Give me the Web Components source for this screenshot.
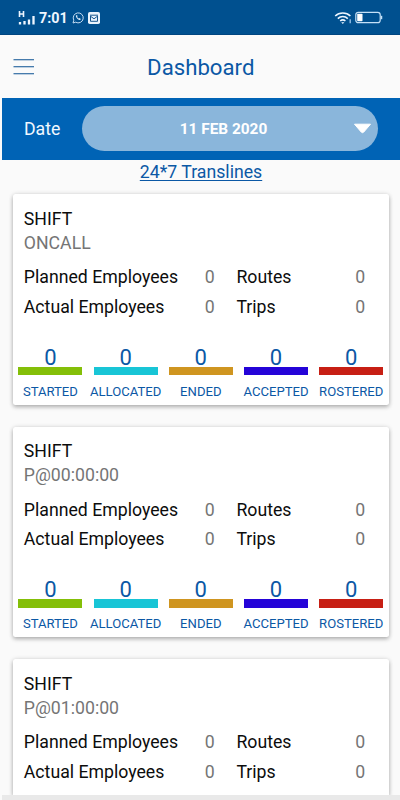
<!DOCTYPE html>
<html lang="en">
<head>
<meta charset="utf-8">
<title>Dashboard</title>
<style>
html, body { margin: 0; height: 800px; overflow: hidden; }
body { background: #fafafa; font-family: Roboto, "Liberation Sans", sans-serif; font-size: 17.7px; color: #0c0c0c; }
</style>
</head>
<body>
<dash-app></dash-app>

<template id="app">
<style>
:host { display: flex; flex-direction: column; height: 800px; overflow: hidden; }
.stack { flex: 1; min-height: 0; overflow: hidden; display: flex; flex-direction: column; padding: 10.3px 11.2px 0 12.8px; gap: 22px; }
.line { height: 24.5px; line-height: 24.5px; text-align: center; padding-left: 2px; flex: none; }
a { color: #0b58a5; text-decoration: underline; text-decoration-thickness: 1px; text-underline-offset: 2px; text-decoration-skip-ink: none; }
.foot { height: 5px; margin-left: 2px; background: #e9e9e9; flex: none; }
</style>
<status-bar></status-bar>
<app-header>Dashboard</app-header>
<date-bar label="Date">11 FEB 2020</date-bar>
<div class="line"><a>24*7 Translines</a></div>
<div class="stack">
<shift-card>ONCALL</shift-card>
<shift-card>P@00:00:00</shift-card>
<shift-card summary>P@01:00:00</shift-card>
</div>
<div class="foot"></div>
</template>

<template id="status">
<style>
:host { display: flex; align-items: center; height: 35px; box-sizing: border-box; background: #00508f; border-bottom: 1px solid #004580; color: #eef6ff; flex: none; padding: 1px 17px 0 18px; }
svg { display: block; flex: none; }
span { font-weight: 700; font-size: 14.3px; line-height: 18px; margin: 0 4px 0 4px; width: 29px; white-space: nowrap; }
.gap { flex: 1; }
</style>
<svg width="17" height="16" viewBox="0 0 17 16"><path d="M1.5 1v6M5.5 1v6M1.5 4h4" stroke="#eef6ff" stroke-width="1.6" fill="none"/><path d="M2 12v2.5M6.5 11v3.5M11 9.5v5M15.5 6v8.5" stroke="#eef6ff" stroke-width="2.3" fill="none"/></svg>
<span>7:01</span>
<svg width="12" height="12" viewBox="0 0 12 12"><path d="M1 11l.8-2.8A5 5 0 1 1 3.7 10.2z" fill="none" stroke="#c4dcf2" stroke-width="1"/><path d="M4 3.4c-.8 1.4 2.4 5 4.2 4.5l.6-1-1.3-.9-.8.5c-.8-.4-1.3-1-1.6-1.7l.5-.6-.6-1.2z" fill="#d7e8f7"/></svg>
<svg style="margin-left:4px" width="12" height="12" viewBox="0 0 12 12"><rect width="12" height="12" rx="1.8" fill="#e8f3fd"/><path d="M2 3.2h8M2.5 4v5.3h7V4M2.5 4.2L6 6.8l3.5-2.6" fill="none" stroke="#17578f" stroke-width="1"/></svg>
<div class="gap"></div>
<svg width="19" height="14" viewBox="0 0 19 14"><g fill="none" stroke="#eef6ff" stroke-width="1.5"><path d="M1.2 5C5.4.9 12.2.9 16.4 5M3.8 7.6c2.8-2.7 7.2-2.7 10 0M6.2 10c1.5-1.3 3.7-1.3 5.2 0"/></g><path d="M7.2 11.2h3.2l-1.6 1.9z" fill="#eef6ff"/><path d="M16.2 8.2v4" stroke="#9dc7ed" stroke-width="1.3"/></svg>
<svg style="margin-left:2.5px" width="28" height="13" viewBox="0 0 28 13"><rect x=".8" y="1.3" width="24.4" height="10.4" rx="2.5" fill="none" stroke="#c4e0f7" stroke-width="1.2"/><rect x="2.2" y="2.8" width="5.3" height="7.4" rx=".8" fill="#fff"/><path d="M26.5 4.8v3.4" stroke="#c4e0f7" stroke-width="1.5"/></svg>
</template>

<template id="header">
<style>
:host { display: grid; grid-template-columns: 34px 1fr 34px; align-items: center; height: 62.5px; flex: none; box-sizing: border-box; padding-top: 1.5px; }
svg { display: block; margin-left: 13px; }
h1 { margin: 0; font-weight: 400; font-size: 22.2px; line-height: 28px; color: #0b58a5; text-align: center; padding-left: 1.5px; }
</style>
<svg width="22" height="18" viewBox="0 0 22 18"><path d="M.5 1.75h20.5M.5 8.75h20.5M.5 15.75h20.5" stroke="#0b5293" stroke-width="1.2"/></svg>
<h1><slot></slot></h1>
</template>

<template id="date">
<style>
:host { display: flex; align-items: center; height: 62px; margin-left: 2px; flex: none; background: #0063b5; box-sizing: border-box; padding: 0 22px 0 22px; color: #f2f8ff; }
.label { width: 58px; line-height: 24px; }
.pill { flex: 1; height: 44.5px; border-radius: 23px; background: #8ab6db; display: grid; grid-template-columns: 24px 1fr 24px; align-items: center; text-align: center; font-weight: 700; font-size: 15.4px; color: #fff; }
svg { display: block; margin-left: -1.5px; }
.val { padding: 0 13px 0 0; line-height: 20px; }
</style>
<div class="label"></div>
<div class="pill"><i></i><div class="val"><slot></slot></div>
<svg width="19" height="12" viewBox="0 0 19 12"><path d="M1.5 1.2h16L10.8 9q-1.3 1.4-2.6 0z" fill="#fff" stroke="#fff" stroke-width="1" stroke-linejoin="round"/></svg></div>
</template>

<template id="card">
<style>
:host { display: block; height: 210.6px; flex: none; box-sizing: border-box; background: #fff; border-radius: 2.5px; box-shadow: 0 2px 4px rgba(0,0,0,.28), 0 0 5px rgba(0,0,0,.1); padding-top: 12.5px; }
.t { line-height: 24px; padding-left: 11px; }
.s { color: #757575; }
.grid { display: grid; grid-template-columns: 171.8px 40.8px 110px 27.6px; grid-auto-rows: 29.6px; line-height: 29.6px; padding: 8.5px 0 0 11px; white-space: nowrap; }
.grid span { color: #757575; text-align: center; }
.grid span:nth-child(4n+2) { text-align: left; padding-left: 9.2px; }
.stats { display: grid; grid-template-columns: repeat(5, 1fr); margin-top: 23.1px; }
:host([summary]) { height: auto; flex: 1; border-radius: 2.5px 2.5px 0 0; }
</style>
<div class="t">SHIFT</div>
<div class="t s"><slot></slot></div>
<div class="grid">
<div>Planned Employees</div><span>0</span><div>Routes</div><span>0</span>
<div>Actual Employees</div><span>0</span><div>Trips</div><span>0</span>
</div>
<div class="stats">
<stat-bar style="--bar:#84bf08">STARTED</stat-bar>
<stat-bar style="--bar:#18c5d6">ALLOCATED</stat-bar>
<stat-bar style="--bar:#cf9520">ENDED</stat-bar>
<stat-bar style="--bar:#2403d8">ACCEPTED</stat-bar>
<stat-bar style="--bar:#c71f14">ROSTERED</stat-bar>
</div>
</template>

<template id="stat">
<style>
:host { display: flex; flex-direction: column; align-items: center; color: #0b58a5; min-width: 0; white-space: nowrap; }
.n { font-size: 22px; line-height: 24px; height: 21.1px; }
.b { height: 8.8px; width: 64.2px; background: var(--bar); }
.l { font-size: 13.1px; line-height: 16px; margin-top: 8.3px; }
</style>
<div class="n">0</div><div class="b"></div><div class="l"><slot></slot></div>
</template>

<script>
function define(name, templateId, setup) {
  customElements.define(name, class extends HTMLElement {
    constructor() {
      super();
      const root = this.attachShadow({ mode: 'open' });
      root.append(document.getElementById(templateId).content.cloneNode(true));
      if (setup) setup(this, root);
    }
  });
}
define('stat-bar', 'stat');
customElements.define('shift-card', class extends HTMLElement {
  constructor() {
    super();
    this.attachShadow({ mode: 'open' })
      .append(document.getElementById('card').content.cloneNode(true));
  }
  connectedCallback() {
    if (this.hasAttribute('summary')) {
      const stats = this.shadowRoot.querySelector('.stats');
      if (stats) stats.remove();
    }
  }
});
define('date-bar', 'date', (host, root) => {
  root.querySelector('.label').textContent = host.getAttribute('label') || 'Date';
});
define('app-header', 'header');
define('status-bar', 'status');
define('dash-app', 'app');
</script>
</body>
</html>
